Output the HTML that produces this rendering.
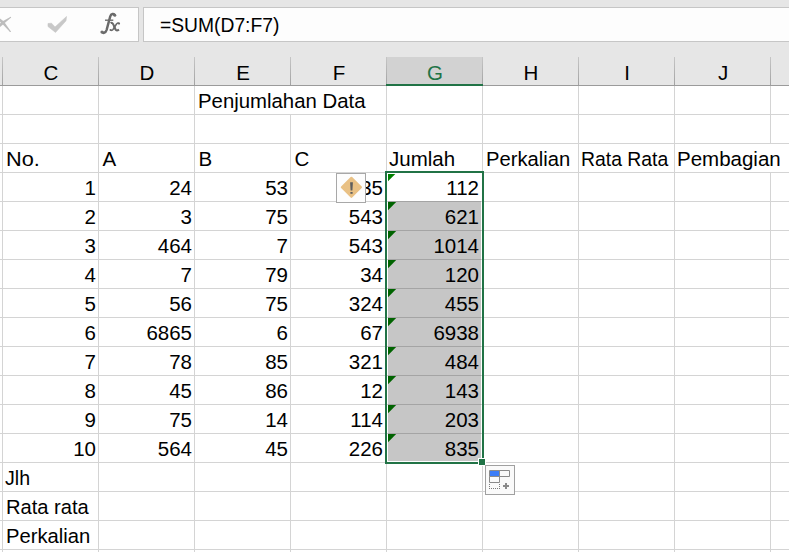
<!DOCTYPE html>
<html><head><meta charset="utf-8"><style>
html,body{margin:0;padding:0;}
body{width:789px;height:552px;overflow:hidden;position:relative;background:#e6e6e6;font-family:"Liberation Sans",sans-serif;color:#000;}
.a{position:absolute;}
.t{position:absolute;white-space:nowrap;font-size:20.5px;line-height:29px;height:29px;}
.r{text-align:right;}
</style></head><body>

<div class="a" style="left:-20px;top:7px;width:158px;height:33px;border:1px solid #c6c6c6;border-left:none;background:#fdfdfd;"></div>
<div class="a" style="left:143px;top:7px;width:700px;height:33px;border:1px solid #c6c6c6;background:#fdfdfd;"></div>
<svg class="a" style="left:0;top:0" width="140" height="45" viewBox="0 0 140 45"><path d="M3.80 23.75 L10.89 17.71 L10.31 16.89 L2.20 21.45 Z M1.92 23.49 L10.01 31.92 L10.79 31.28 L4.08 21.71 Z M3.92 21.54 L-3.34 15.75 L-4.66 17.25 L2.08 23.66 Z M2.06 21.57 L-4.67 28.26 L-3.33 29.74 L3.94 23.63 Z" fill="#bdbdbd"/><circle cx="10.5" cy="17.4" r="0.6" fill="#bdbdbd"/><circle cx="10.3" cy="31.5" r="0.6" fill="#bdbdbd"/><path d="M48 23.5 L51.5 23.2 L55 27 L66.5 16.5 L66 20.8 L55.5 32.4 L48 26.5 Z" fill="#c8c8c8" stroke="#c8c8c8" stroke-width="0.6" stroke-linejoin="round"/><path d="M115 15.5 C114 13 111 13.5 110.2 16.5 L106.6 30 C105.5 33.5 102.5 33.5 102 31.5" stroke="#6a6a6a" stroke-width="2.5" fill="none"/><circle cx="114.8" cy="15.3" r="1.5" fill="#6e6e6e"/><circle cx="102" cy="32" r="1.6" fill="#6e6e6e"/><path d="M105 20.2 H113.3" stroke="#6e6e6e" stroke-width="1.4"/><path d="M110.6 23.2 Q112.5 21.8 114 26 L115.5 29.5 Q116.5 31.2 119 29.6" stroke="#6a6a6a" stroke-width="2.1" fill="none"/><path d="M119 23.3 Q118 22.2 116.5 24 L113 29.5 Q111.8 31 110.6 30" stroke="#6a6a6a" stroke-width="1.5" fill="none"/><circle cx="119" cy="23.6" r="1.1" fill="#6a6a6a"/><circle cx="110.6" cy="30" r="1.1" fill="#6a6a6a"/></svg>
<div class="t" style="left:160px;top:10px;transform:scaleX(0.94);transform-origin:0 0;">=SUM(D7:F7)</div>
<div class="a" style="left:0;top:85px;width:789px;height:1px;background:#9b9b9b;"></div>
<div class="a" style="left:386px;top:57px;width:96px;height:27px;background:#d2d2d2;"></div>
<div class="a" style="left:2px;top:57px;width:1px;height:28px;background:linear-gradient(#c6c6c6,#a2a2a2);"></div>
<div class="a" style="left:98px;top:57px;width:1px;height:28px;background:linear-gradient(#c6c6c6,#a2a2a2);"></div>
<div class="a" style="left:194px;top:57px;width:1px;height:28px;background:linear-gradient(#c6c6c6,#a2a2a2);"></div>
<div class="a" style="left:290px;top:57px;width:1px;height:28px;background:linear-gradient(#c6c6c6,#a2a2a2);"></div>
<div class="a" style="left:386px;top:57px;width:1px;height:28px;background:linear-gradient(#c6c6c6,#a2a2a2);"></div>
<div class="a" style="left:482px;top:57px;width:1px;height:28px;background:linear-gradient(#c6c6c6,#a2a2a2);"></div>
<div class="a" style="left:578px;top:57px;width:1px;height:28px;background:linear-gradient(#c6c6c6,#a2a2a2);"></div>
<div class="a" style="left:674px;top:57px;width:1px;height:28px;background:linear-gradient(#c6c6c6,#a2a2a2);"></div>
<div class="a" style="left:770px;top:57px;width:1px;height:28px;background:linear-gradient(#c6c6c6,#a2a2a2);"></div>
<div class="a" style="left:386px;top:84px;width:97px;height:2px;background:#217346;"></div>
<div class="t" style="left:2px;width:96px;top:58px;text-align:center;color:#000;padding-left:2px;box-sizing:border-box">C</div>
<div class="t" style="left:98px;width:96px;top:58px;text-align:center;color:#000;padding-left:2px;box-sizing:border-box">D</div>
<div class="t" style="left:194px;width:96px;top:58px;text-align:center;color:#000;padding-left:2px;box-sizing:border-box">E</div>
<div class="t" style="left:290px;width:96px;top:58px;text-align:center;color:#000;padding-left:2px;box-sizing:border-box">F</div>
<div class="t" style="left:386px;width:96px;top:58px;text-align:center;color:#217346;padding-left:2px;box-sizing:border-box">G</div>
<div class="t" style="left:482px;width:96px;top:58px;text-align:center;color:#000;padding-left:2px;box-sizing:border-box">H</div>
<div class="t" style="left:578px;width:96px;top:58px;text-align:center;color:#000;padding-left:2px;box-sizing:border-box">I</div>
<div class="t" style="left:674px;width:96px;top:58px;text-align:center;color:#000;padding-left:2px;box-sizing:border-box">J</div>
<div class="a" style="left:0;top:86px;width:789px;height:466px;background:#fff;"></div>
<div class="a" style="left:0;top:114px;width:789px;height:1px;background:#d4d4d4;"></div>
<div class="a" style="left:0;top:143px;width:789px;height:1px;background:#d4d4d4;"></div>
<div class="a" style="left:0;top:172px;width:789px;height:1px;background:#d4d4d4;"></div>
<div class="a" style="left:0;top:201px;width:789px;height:1px;background:#d4d4d4;"></div>
<div class="a" style="left:0;top:230px;width:789px;height:1px;background:#d4d4d4;"></div>
<div class="a" style="left:0;top:259px;width:789px;height:1px;background:#d4d4d4;"></div>
<div class="a" style="left:0;top:288px;width:789px;height:1px;background:#d4d4d4;"></div>
<div class="a" style="left:0;top:317px;width:789px;height:1px;background:#d4d4d4;"></div>
<div class="a" style="left:0;top:346px;width:789px;height:1px;background:#d4d4d4;"></div>
<div class="a" style="left:0;top:375px;width:789px;height:1px;background:#d4d4d4;"></div>
<div class="a" style="left:0;top:404px;width:789px;height:1px;background:#d4d4d4;"></div>
<div class="a" style="left:0;top:433px;width:789px;height:1px;background:#d4d4d4;"></div>
<div class="a" style="left:0;top:462px;width:789px;height:1px;background:#d4d4d4;"></div>
<div class="a" style="left:0;top:491px;width:789px;height:1px;background:#d4d4d4;"></div>
<div class="a" style="left:0;top:520px;width:789px;height:1px;background:#d4d4d4;"></div>
<div class="a" style="left:0;top:549px;width:789px;height:1px;background:#d4d4d4;"></div>
<div class="a" style="left:2px;top:86px;width:1px;height:29px;background:#d4d4d4;"></div>
<div class="a" style="left:2px;top:115px;width:1px;height:29px;background:#d4d4d4;"></div>
<div class="a" style="left:2px;top:144px;width:1px;height:29px;background:#d4d4d4;"></div>
<div class="a" style="left:2px;top:173px;width:1px;height:29px;background:#d4d4d4;"></div>
<div class="a" style="left:2px;top:202px;width:1px;height:29px;background:#d4d4d4;"></div>
<div class="a" style="left:2px;top:231px;width:1px;height:29px;background:#d4d4d4;"></div>
<div class="a" style="left:2px;top:260px;width:1px;height:29px;background:#d4d4d4;"></div>
<div class="a" style="left:2px;top:289px;width:1px;height:29px;background:#d4d4d4;"></div>
<div class="a" style="left:2px;top:318px;width:1px;height:29px;background:#d4d4d4;"></div>
<div class="a" style="left:2px;top:347px;width:1px;height:29px;background:#d4d4d4;"></div>
<div class="a" style="left:2px;top:376px;width:1px;height:29px;background:#d4d4d4;"></div>
<div class="a" style="left:2px;top:405px;width:1px;height:29px;background:#d4d4d4;"></div>
<div class="a" style="left:2px;top:434px;width:1px;height:29px;background:#d4d4d4;"></div>
<div class="a" style="left:2px;top:463px;width:1px;height:29px;background:#d4d4d4;"></div>
<div class="a" style="left:2px;top:492px;width:1px;height:29px;background:#d4d4d4;"></div>
<div class="a" style="left:2px;top:521px;width:1px;height:29px;background:#d4d4d4;"></div>
<div class="a" style="left:2px;top:550px;width:1px;height:2px;background:#d4d4d4;"></div>
<div class="a" style="left:98px;top:86px;width:1px;height:29px;background:#d4d4d4;"></div>
<div class="a" style="left:98px;top:115px;width:1px;height:29px;background:#d4d4d4;"></div>
<div class="a" style="left:98px;top:144px;width:1px;height:29px;background:#d4d4d4;"></div>
<div class="a" style="left:98px;top:173px;width:1px;height:29px;background:#d4d4d4;"></div>
<div class="a" style="left:98px;top:202px;width:1px;height:29px;background:#d4d4d4;"></div>
<div class="a" style="left:98px;top:231px;width:1px;height:29px;background:#d4d4d4;"></div>
<div class="a" style="left:98px;top:260px;width:1px;height:29px;background:#d4d4d4;"></div>
<div class="a" style="left:98px;top:289px;width:1px;height:29px;background:#d4d4d4;"></div>
<div class="a" style="left:98px;top:318px;width:1px;height:29px;background:#d4d4d4;"></div>
<div class="a" style="left:98px;top:347px;width:1px;height:29px;background:#d4d4d4;"></div>
<div class="a" style="left:98px;top:376px;width:1px;height:29px;background:#d4d4d4;"></div>
<div class="a" style="left:98px;top:405px;width:1px;height:29px;background:#d4d4d4;"></div>
<div class="a" style="left:98px;top:434px;width:1px;height:29px;background:#d4d4d4;"></div>
<div class="a" style="left:98px;top:463px;width:1px;height:29px;background:#d4d4d4;"></div>
<div class="a" style="left:98px;top:492px;width:1px;height:29px;background:#d4d4d4;"></div>
<div class="a" style="left:98px;top:521px;width:1px;height:29px;background:#d4d4d4;"></div>
<div class="a" style="left:98px;top:550px;width:1px;height:2px;background:#d4d4d4;"></div>
<div class="a" style="left:194px;top:86px;width:1px;height:29px;background:#d4d4d4;"></div>
<div class="a" style="left:194px;top:115px;width:1px;height:29px;background:#d4d4d4;"></div>
<div class="a" style="left:194px;top:144px;width:1px;height:29px;background:#d4d4d4;"></div>
<div class="a" style="left:194px;top:173px;width:1px;height:29px;background:#d4d4d4;"></div>
<div class="a" style="left:194px;top:202px;width:1px;height:29px;background:#d4d4d4;"></div>
<div class="a" style="left:194px;top:231px;width:1px;height:29px;background:#d4d4d4;"></div>
<div class="a" style="left:194px;top:260px;width:1px;height:29px;background:#d4d4d4;"></div>
<div class="a" style="left:194px;top:289px;width:1px;height:29px;background:#d4d4d4;"></div>
<div class="a" style="left:194px;top:318px;width:1px;height:29px;background:#d4d4d4;"></div>
<div class="a" style="left:194px;top:347px;width:1px;height:29px;background:#d4d4d4;"></div>
<div class="a" style="left:194px;top:376px;width:1px;height:29px;background:#d4d4d4;"></div>
<div class="a" style="left:194px;top:405px;width:1px;height:29px;background:#d4d4d4;"></div>
<div class="a" style="left:194px;top:434px;width:1px;height:29px;background:#d4d4d4;"></div>
<div class="a" style="left:194px;top:463px;width:1px;height:29px;background:#d4d4d4;"></div>
<div class="a" style="left:194px;top:492px;width:1px;height:29px;background:#d4d4d4;"></div>
<div class="a" style="left:194px;top:521px;width:1px;height:29px;background:#d4d4d4;"></div>
<div class="a" style="left:194px;top:550px;width:1px;height:2px;background:#d4d4d4;"></div>
<div class="a" style="left:290px;top:115px;width:1px;height:29px;background:#d4d4d4;"></div>
<div class="a" style="left:290px;top:144px;width:1px;height:29px;background:#d4d4d4;"></div>
<div class="a" style="left:290px;top:173px;width:1px;height:29px;background:#d4d4d4;"></div>
<div class="a" style="left:290px;top:202px;width:1px;height:29px;background:#d4d4d4;"></div>
<div class="a" style="left:290px;top:231px;width:1px;height:29px;background:#d4d4d4;"></div>
<div class="a" style="left:290px;top:260px;width:1px;height:29px;background:#d4d4d4;"></div>
<div class="a" style="left:290px;top:289px;width:1px;height:29px;background:#d4d4d4;"></div>
<div class="a" style="left:290px;top:318px;width:1px;height:29px;background:#d4d4d4;"></div>
<div class="a" style="left:290px;top:347px;width:1px;height:29px;background:#d4d4d4;"></div>
<div class="a" style="left:290px;top:376px;width:1px;height:29px;background:#d4d4d4;"></div>
<div class="a" style="left:290px;top:405px;width:1px;height:29px;background:#d4d4d4;"></div>
<div class="a" style="left:290px;top:434px;width:1px;height:29px;background:#d4d4d4;"></div>
<div class="a" style="left:290px;top:463px;width:1px;height:29px;background:#d4d4d4;"></div>
<div class="a" style="left:290px;top:492px;width:1px;height:29px;background:#d4d4d4;"></div>
<div class="a" style="left:290px;top:521px;width:1px;height:29px;background:#d4d4d4;"></div>
<div class="a" style="left:290px;top:550px;width:1px;height:2px;background:#d4d4d4;"></div>
<div class="a" style="left:386px;top:86px;width:1px;height:29px;background:#d4d4d4;"></div>
<div class="a" style="left:386px;top:115px;width:1px;height:29px;background:#d4d4d4;"></div>
<div class="a" style="left:386px;top:144px;width:1px;height:29px;background:#d4d4d4;"></div>
<div class="a" style="left:386px;top:173px;width:1px;height:29px;background:#d4d4d4;"></div>
<div class="a" style="left:386px;top:202px;width:1px;height:29px;background:#d4d4d4;"></div>
<div class="a" style="left:386px;top:231px;width:1px;height:29px;background:#d4d4d4;"></div>
<div class="a" style="left:386px;top:260px;width:1px;height:29px;background:#d4d4d4;"></div>
<div class="a" style="left:386px;top:289px;width:1px;height:29px;background:#d4d4d4;"></div>
<div class="a" style="left:386px;top:318px;width:1px;height:29px;background:#d4d4d4;"></div>
<div class="a" style="left:386px;top:347px;width:1px;height:29px;background:#d4d4d4;"></div>
<div class="a" style="left:386px;top:376px;width:1px;height:29px;background:#d4d4d4;"></div>
<div class="a" style="left:386px;top:405px;width:1px;height:29px;background:#d4d4d4;"></div>
<div class="a" style="left:386px;top:434px;width:1px;height:29px;background:#d4d4d4;"></div>
<div class="a" style="left:386px;top:463px;width:1px;height:29px;background:#d4d4d4;"></div>
<div class="a" style="left:386px;top:492px;width:1px;height:29px;background:#d4d4d4;"></div>
<div class="a" style="left:386px;top:521px;width:1px;height:29px;background:#d4d4d4;"></div>
<div class="a" style="left:386px;top:550px;width:1px;height:2px;background:#d4d4d4;"></div>
<div class="a" style="left:482px;top:86px;width:1px;height:29px;background:#d4d4d4;"></div>
<div class="a" style="left:482px;top:115px;width:1px;height:29px;background:#d4d4d4;"></div>
<div class="a" style="left:482px;top:144px;width:1px;height:29px;background:#d4d4d4;"></div>
<div class="a" style="left:482px;top:173px;width:1px;height:29px;background:#d4d4d4;"></div>
<div class="a" style="left:482px;top:202px;width:1px;height:29px;background:#d4d4d4;"></div>
<div class="a" style="left:482px;top:231px;width:1px;height:29px;background:#d4d4d4;"></div>
<div class="a" style="left:482px;top:260px;width:1px;height:29px;background:#d4d4d4;"></div>
<div class="a" style="left:482px;top:289px;width:1px;height:29px;background:#d4d4d4;"></div>
<div class="a" style="left:482px;top:318px;width:1px;height:29px;background:#d4d4d4;"></div>
<div class="a" style="left:482px;top:347px;width:1px;height:29px;background:#d4d4d4;"></div>
<div class="a" style="left:482px;top:376px;width:1px;height:29px;background:#d4d4d4;"></div>
<div class="a" style="left:482px;top:405px;width:1px;height:29px;background:#d4d4d4;"></div>
<div class="a" style="left:482px;top:434px;width:1px;height:29px;background:#d4d4d4;"></div>
<div class="a" style="left:482px;top:463px;width:1px;height:29px;background:#d4d4d4;"></div>
<div class="a" style="left:482px;top:492px;width:1px;height:29px;background:#d4d4d4;"></div>
<div class="a" style="left:482px;top:521px;width:1px;height:29px;background:#d4d4d4;"></div>
<div class="a" style="left:482px;top:550px;width:1px;height:2px;background:#d4d4d4;"></div>
<div class="a" style="left:578px;top:86px;width:1px;height:29px;background:#d4d4d4;"></div>
<div class="a" style="left:578px;top:115px;width:1px;height:29px;background:#d4d4d4;"></div>
<div class="a" style="left:578px;top:144px;width:1px;height:29px;background:#d4d4d4;"></div>
<div class="a" style="left:578px;top:173px;width:1px;height:29px;background:#d4d4d4;"></div>
<div class="a" style="left:578px;top:202px;width:1px;height:29px;background:#d4d4d4;"></div>
<div class="a" style="left:578px;top:231px;width:1px;height:29px;background:#d4d4d4;"></div>
<div class="a" style="left:578px;top:260px;width:1px;height:29px;background:#d4d4d4;"></div>
<div class="a" style="left:578px;top:289px;width:1px;height:29px;background:#d4d4d4;"></div>
<div class="a" style="left:578px;top:318px;width:1px;height:29px;background:#d4d4d4;"></div>
<div class="a" style="left:578px;top:347px;width:1px;height:29px;background:#d4d4d4;"></div>
<div class="a" style="left:578px;top:376px;width:1px;height:29px;background:#d4d4d4;"></div>
<div class="a" style="left:578px;top:405px;width:1px;height:29px;background:#d4d4d4;"></div>
<div class="a" style="left:578px;top:434px;width:1px;height:29px;background:#d4d4d4;"></div>
<div class="a" style="left:578px;top:463px;width:1px;height:29px;background:#d4d4d4;"></div>
<div class="a" style="left:578px;top:492px;width:1px;height:29px;background:#d4d4d4;"></div>
<div class="a" style="left:578px;top:521px;width:1px;height:29px;background:#d4d4d4;"></div>
<div class="a" style="left:578px;top:550px;width:1px;height:2px;background:#d4d4d4;"></div>
<div class="a" style="left:674px;top:86px;width:1px;height:29px;background:#d4d4d4;"></div>
<div class="a" style="left:674px;top:115px;width:1px;height:29px;background:#d4d4d4;"></div>
<div class="a" style="left:674px;top:144px;width:1px;height:29px;background:#d4d4d4;"></div>
<div class="a" style="left:674px;top:173px;width:1px;height:29px;background:#d4d4d4;"></div>
<div class="a" style="left:674px;top:202px;width:1px;height:29px;background:#d4d4d4;"></div>
<div class="a" style="left:674px;top:231px;width:1px;height:29px;background:#d4d4d4;"></div>
<div class="a" style="left:674px;top:260px;width:1px;height:29px;background:#d4d4d4;"></div>
<div class="a" style="left:674px;top:289px;width:1px;height:29px;background:#d4d4d4;"></div>
<div class="a" style="left:674px;top:318px;width:1px;height:29px;background:#d4d4d4;"></div>
<div class="a" style="left:674px;top:347px;width:1px;height:29px;background:#d4d4d4;"></div>
<div class="a" style="left:674px;top:376px;width:1px;height:29px;background:#d4d4d4;"></div>
<div class="a" style="left:674px;top:405px;width:1px;height:29px;background:#d4d4d4;"></div>
<div class="a" style="left:674px;top:434px;width:1px;height:29px;background:#d4d4d4;"></div>
<div class="a" style="left:674px;top:463px;width:1px;height:29px;background:#d4d4d4;"></div>
<div class="a" style="left:674px;top:492px;width:1px;height:29px;background:#d4d4d4;"></div>
<div class="a" style="left:674px;top:521px;width:1px;height:29px;background:#d4d4d4;"></div>
<div class="a" style="left:674px;top:550px;width:1px;height:2px;background:#d4d4d4;"></div>
<div class="a" style="left:770px;top:86px;width:1px;height:29px;background:#d4d4d4;"></div>
<div class="a" style="left:770px;top:115px;width:1px;height:29px;background:#d4d4d4;"></div>
<div class="a" style="left:770px;top:173px;width:1px;height:29px;background:#d4d4d4;"></div>
<div class="a" style="left:770px;top:202px;width:1px;height:29px;background:#d4d4d4;"></div>
<div class="a" style="left:770px;top:231px;width:1px;height:29px;background:#d4d4d4;"></div>
<div class="a" style="left:770px;top:260px;width:1px;height:29px;background:#d4d4d4;"></div>
<div class="a" style="left:770px;top:289px;width:1px;height:29px;background:#d4d4d4;"></div>
<div class="a" style="left:770px;top:318px;width:1px;height:29px;background:#d4d4d4;"></div>
<div class="a" style="left:770px;top:347px;width:1px;height:29px;background:#d4d4d4;"></div>
<div class="a" style="left:770px;top:376px;width:1px;height:29px;background:#d4d4d4;"></div>
<div class="a" style="left:770px;top:405px;width:1px;height:29px;background:#d4d4d4;"></div>
<div class="a" style="left:770px;top:434px;width:1px;height:29px;background:#d4d4d4;"></div>
<div class="a" style="left:770px;top:463px;width:1px;height:29px;background:#d4d4d4;"></div>
<div class="a" style="left:770px;top:492px;width:1px;height:29px;background:#d4d4d4;"></div>
<div class="a" style="left:770px;top:521px;width:1px;height:29px;background:#d4d4d4;"></div>
<div class="a" style="left:770px;top:550px;width:1px;height:2px;background:#d4d4d4;"></div>
<div class="t" style="left:198px;top:86px;transform:scaleX(0.993);transform-origin:0 0;">Penjumlahan Data</div>
<div class="t" style="left:6px;top:144px;transform:scaleX(1.06);transform-origin:0 0;">No.</div>
<div class="t" style="left:102.5px;top:144px;">A</div>
<div class="t" style="left:198.5px;top:144px;">B</div>
<div class="t" style="left:294.5px;top:144px;">C</div>
<div class="t" style="left:389px;top:144px;">Jumlah</div>
<div class="t" style="left:485.5px;top:144px;transform:scaleX(0.985);transform-origin:0 0;">Perkalian</div>
<div class="t" style="left:581px;top:144px;transform:scaleX(0.945);transform-origin:0 0;">Rata Rata</div>
<div class="t" style="left:677px;top:144px;">Pembagian</div>
<div class="t r" style="left:2px;width:94px;top:173px;">1</div>
<div class="t r" style="left:98px;width:94px;top:173px;">24</div>
<div class="t r" style="left:194px;width:94px;top:173px;">53</div>
<div class="t r" style="left:290px;width:93px;top:173px;">35</div>
<div class="t r" style="left:386px;width:93px;top:173px;">112</div>
<div class="t r" style="left:2px;width:94px;top:202px;">2</div>
<div class="t r" style="left:98px;width:94px;top:202px;">3</div>
<div class="t r" style="left:194px;width:94px;top:202px;">75</div>
<div class="t r" style="left:290px;width:93px;top:202px;">543</div>
<div class="t r" style="left:386px;width:93px;top:202px;">621</div>
<div class="t r" style="left:2px;width:94px;top:231px;">3</div>
<div class="t r" style="left:98px;width:94px;top:231px;">464</div>
<div class="t r" style="left:194px;width:94px;top:231px;">7</div>
<div class="t r" style="left:290px;width:93px;top:231px;">543</div>
<div class="t r" style="left:386px;width:93px;top:231px;">1014</div>
<div class="t r" style="left:2px;width:94px;top:260px;">4</div>
<div class="t r" style="left:98px;width:94px;top:260px;">7</div>
<div class="t r" style="left:194px;width:94px;top:260px;">79</div>
<div class="t r" style="left:290px;width:93px;top:260px;">34</div>
<div class="t r" style="left:386px;width:93px;top:260px;">120</div>
<div class="t r" style="left:2px;width:94px;top:289px;">5</div>
<div class="t r" style="left:98px;width:94px;top:289px;">56</div>
<div class="t r" style="left:194px;width:94px;top:289px;">75</div>
<div class="t r" style="left:290px;width:93px;top:289px;">324</div>
<div class="t r" style="left:386px;width:93px;top:289px;">455</div>
<div class="t r" style="left:2px;width:94px;top:318px;">6</div>
<div class="t r" style="left:98px;width:94px;top:318px;">6865</div>
<div class="t r" style="left:194px;width:94px;top:318px;">6</div>
<div class="t r" style="left:290px;width:93px;top:318px;">67</div>
<div class="t r" style="left:386px;width:93px;top:318px;">6938</div>
<div class="t r" style="left:2px;width:94px;top:347px;">7</div>
<div class="t r" style="left:98px;width:94px;top:347px;">78</div>
<div class="t r" style="left:194px;width:94px;top:347px;">85</div>
<div class="t r" style="left:290px;width:93px;top:347px;">321</div>
<div class="t r" style="left:386px;width:93px;top:347px;">484</div>
<div class="t r" style="left:2px;width:94px;top:376px;">8</div>
<div class="t r" style="left:98px;width:94px;top:376px;">45</div>
<div class="t r" style="left:194px;width:94px;top:376px;">86</div>
<div class="t r" style="left:290px;width:93px;top:376px;">12</div>
<div class="t r" style="left:386px;width:93px;top:376px;">143</div>
<div class="t r" style="left:2px;width:94px;top:405px;">9</div>
<div class="t r" style="left:98px;width:94px;top:405px;">75</div>
<div class="t r" style="left:194px;width:94px;top:405px;">14</div>
<div class="t r" style="left:290px;width:93px;top:405px;">114</div>
<div class="t r" style="left:386px;width:93px;top:405px;">203</div>
<div class="t r" style="left:2px;width:94px;top:434px;">10</div>
<div class="t r" style="left:98px;width:94px;top:434px;">564</div>
<div class="t r" style="left:194px;width:94px;top:434px;">45</div>
<div class="t r" style="left:290px;width:93px;top:434px;">226</div>
<div class="t r" style="left:386px;width:93px;top:434px;">835</div>
<div class="t" style="left:5px;top:463px;transform:scaleX(0.955);transform-origin:0 0;">Jlh</div>
<div class="t" style="left:5.5px;top:492px;transform:scaleX(0.982);transform-origin:0 0;">Rata rata</div>
<div class="t" style="left:5.5px;top:521px;transform:scaleX(0.985);transform-origin:0 0;">Perkalian</div>
<svg class="a" style="left:388px;top:174px" width="9" height="9"><path d="M0 0 L7.3 0 L0 7.3 Z" fill="#008000"/></svg>
<svg class="a" style="left:388px;top:202px" width="9" height="9"><path d="M0 0 L8.2 0 L0 8.2 Z" fill="#008000"/></svg>
<svg class="a" style="left:388px;top:231px" width="9" height="9"><path d="M0 0 L8.2 0 L0 8.2 Z" fill="#008000"/></svg>
<svg class="a" style="left:388px;top:260px" width="9" height="9"><path d="M0 0 L8.2 0 L0 8.2 Z" fill="#008000"/></svg>
<svg class="a" style="left:388px;top:289px" width="9" height="9"><path d="M0 0 L8.2 0 L0 8.2 Z" fill="#008000"/></svg>
<svg class="a" style="left:388px;top:318px" width="9" height="9"><path d="M0 0 L8.2 0 L0 8.2 Z" fill="#008000"/></svg>
<svg class="a" style="left:388px;top:347px" width="9" height="9"><path d="M0 0 L8.2 0 L0 8.2 Z" fill="#008000"/></svg>
<svg class="a" style="left:388px;top:376px" width="9" height="9"><path d="M0 0 L8.2 0 L0 8.2 Z" fill="#008000"/></svg>
<svg class="a" style="left:388px;top:405px" width="9" height="9"><path d="M0 0 L8.2 0 L0 8.2 Z" fill="#008000"/></svg>
<svg class="a" style="left:388px;top:434px" width="9" height="9"><path d="M0 0 L8.2 0 L0 8.2 Z" fill="#008000"/></svg>
<div class="a" style="left:388px;top:201px;width:93px;height:260px;background:rgba(0,0,0,0.224);"></div>
<div class="a" style="left:385px;top:171px;width:99px;height:2px;background:#217346;"></div>
<div class="a" style="left:385px;top:462px;width:99px;height:2px;background:#217346;"></div>
<div class="a" style="left:385px;top:171px;width:2px;height:293px;background:#217346;"></div>
<div class="a" style="left:482px;top:171px;width:2px;height:293px;background:#217346;"></div>
<div class="a" style="left:478px;top:458px;width:8px;height:8px;background:#fff;"></div>
<div class="a" style="left:479px;top:459px;width:6px;height:6px;background:#217346;"></div>
<div class="a" style="left:336px;top:173px;width:28px;height:28px;border:1px solid #a8a8a8;background:#fdfdfd;"></div>
<svg class="a" style="left:336px;top:173px" width="30" height="30" viewBox="0 0 30 30"><path d="M15.4 4.8 L24.9 14.3 L15.4 23.8 L5.9 14.3 Z" fill="#e9c185" stroke="#e9c185" stroke-width="2.2" stroke-linejoin="round"/><path d="M14.1 9.2 H16.9 L16.4 17.5 H14.6 Z" fill="#5e5e5e"/><rect x="14.4" y="19" width="2.2" height="1.8" fill="#5e5e5e"/></svg>
<div class="a" style="left:485px;top:465px;width:28px;height:28px;border:1px solid #a0a0a0;background:#fafafa;"></div>
<svg class="a" style="left:485px;top:465px" width="30" height="30" viewBox="0 0 30 30"><rect x="5" y="6" width="9" height="5" fill="#3b7cf6"/><path d="M4.5 5.5 H24.5 V11.5 H4.5 Z M14.5 5.5 V17.5 M4.5 11.5 V17.5 H14.5" stroke="#8a8a8a" stroke-width="1" fill="none"/><rect x="4" y="19" width="1" height="1" fill="#7a7a7a"/><rect x="4" y="21" width="1" height="1" fill="#7a7a7a"/><rect x="4" y="23" width="1" height="1" fill="#7a7a7a"/><rect x="6" y="23" width="1" height="1" fill="#7a7a7a"/><rect x="8" y="23" width="1" height="1" fill="#7a7a7a"/><rect x="10" y="23" width="1" height="1" fill="#7a7a7a"/><rect x="12" y="23" width="1" height="1" fill="#7a7a7a"/><rect x="14" y="23" width="1" height="1" fill="#7a7a7a"/><rect x="14" y="21" width="1" height="1" fill="#7a7a7a"/><rect x="14" y="19" width="1" height="1" fill="#7a7a7a"/><path d="M21 18 V24 M18 21 H24" stroke="#8a8a8a" stroke-width="2" fill="none"/></svg>
</body></html>
